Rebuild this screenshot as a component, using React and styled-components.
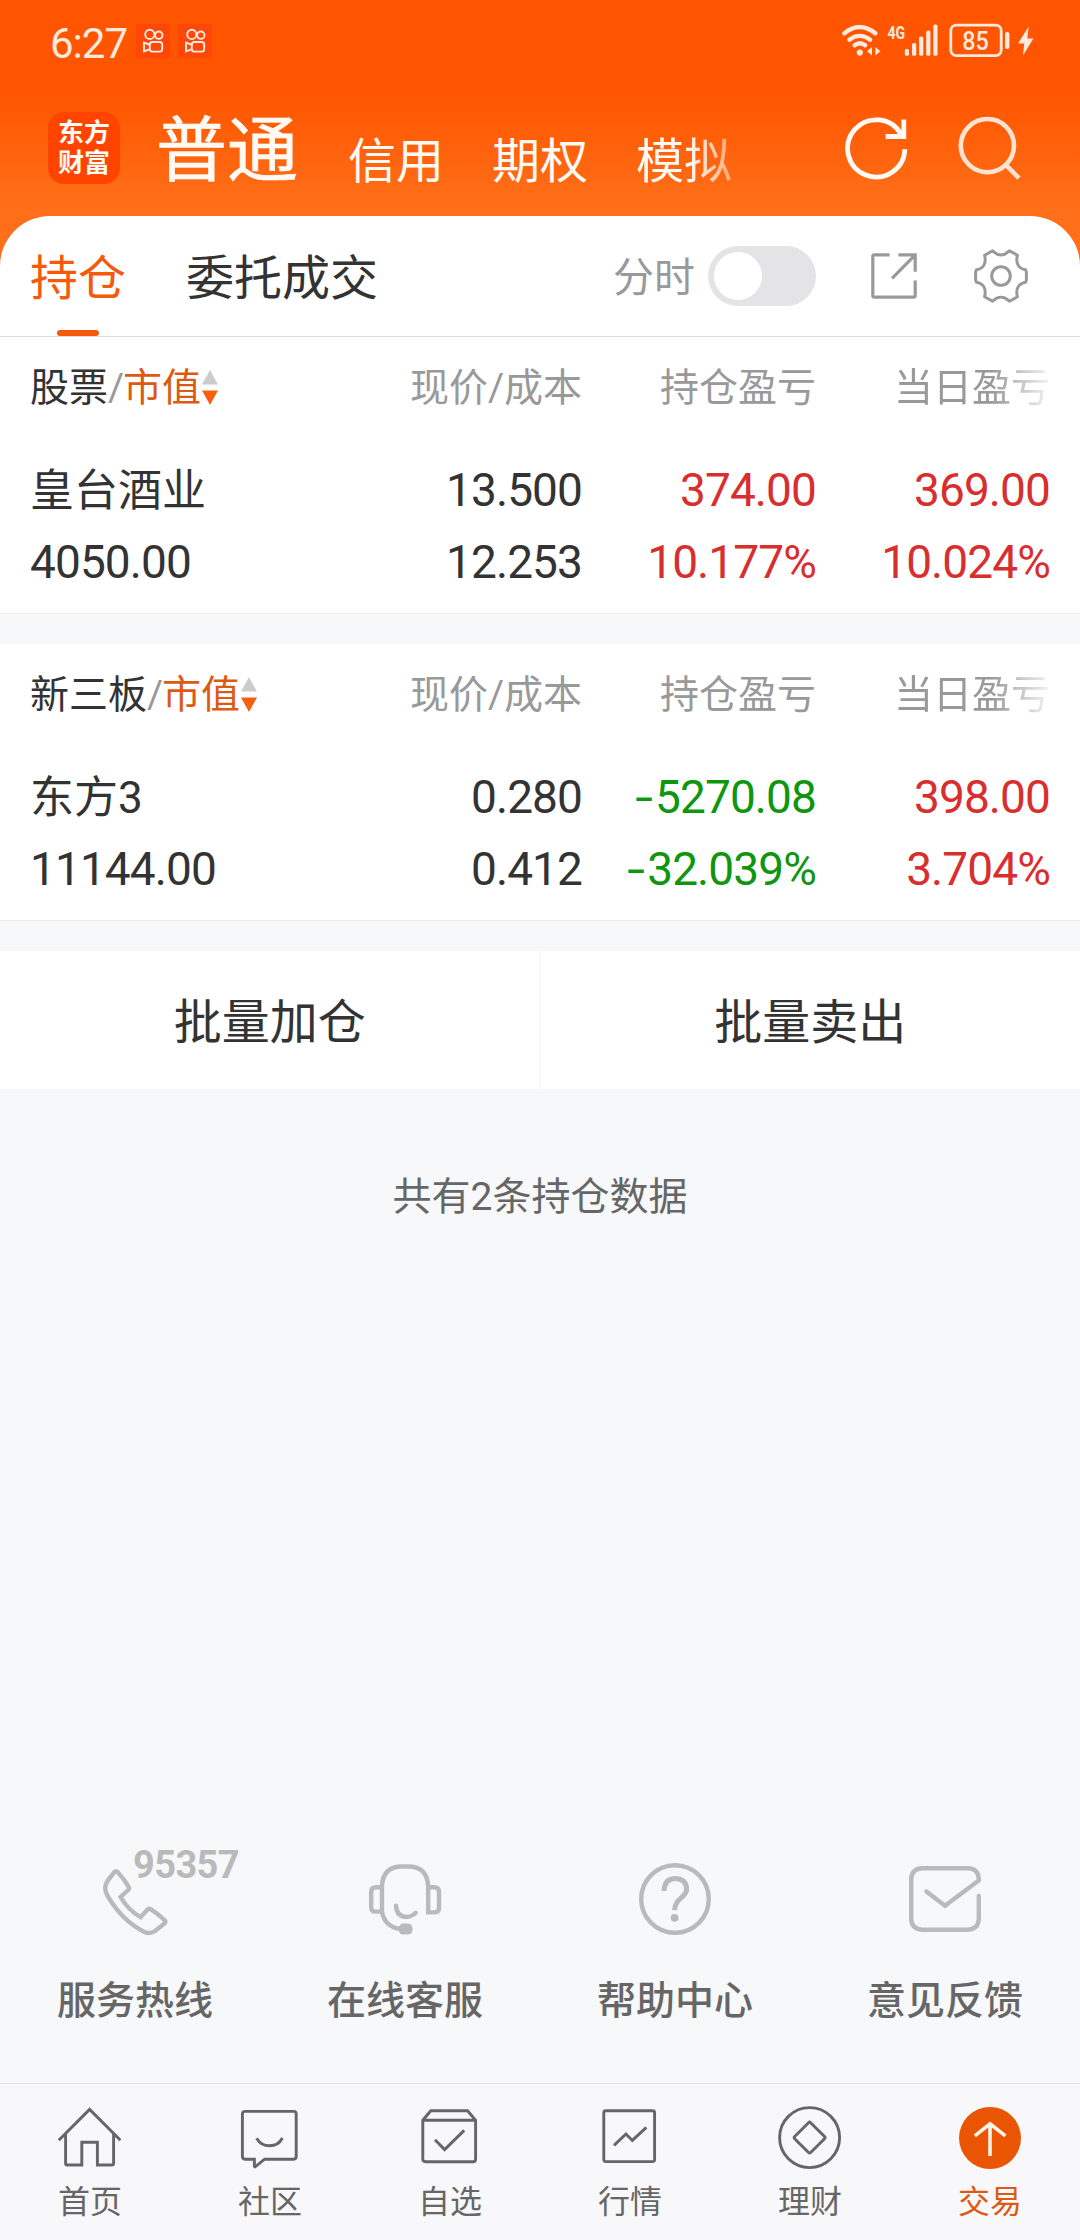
import React from 'react'
import styled, { createGlobalStyle } from 'styled-components';

const holdings = [
  {
    market: '股票',
    name: '皇台酒业',
    value: '4050.00',
    price: '13.500',
    cost: '12.253',
    profit: '374.00',
    profitRate: '10.177%',
    day: '369.00',
    dayRate: '10.024%',
  },
  {
    market: '新三板',
    name: '东方3',
    value: '11144.00',
    price: '0.280',
    cost: '0.412',
    profit: '-5270.08',
    profitRate: '-32.039%',
    day: '398.00',
    dayRate: '3.704%',
  },
]

// green for a loss, red for a gain
const Amount = ({ text }) => {
  const loss = text.startsWith('-')
  return (
    <Num $color={loss ? '#0f960f' : '#d92e2e'}>
      {loss && <Sign>-</Sign>}{loss ? text.slice(1) : text}
    </Num>
  )
}

const KuaiIcon = () => (
  <AppTile>
    <svg width="34" height="34" viewBox="0 0 34 34" fill="none" stroke="#ffeadd" strokeWidth="1.9">
      <circle cx="13.8" cy="10.4" r="4.6" />
      <circle cx="22.8" cy="11.2" r="3.7" />
      <rect x="13.8" y="18" width="12.4" height="9.6" rx="2.6" />
      <path d="M13.4 20.5L8 18.6v8.8l5.4-2" />
    </svg>
  </AppTile>
)

const StatusIcons = () => (
  <svg width="194" height="36" viewBox="842 23 194 36" fill="none" stroke="#ffeadd">
    <g strokeWidth="4.3" strokeLinecap="round">
      <path d="M844.3 33.3Q859.6 20.8 875.3 33.3" />
      <path d="M849.3 39.7Q859.6 32 870.2 39.7" />
      <path d="M854.6 45.3Q859.8 41.2 865.2 45.3" />
    </g>
    <circle cx="859.8" cy="52.6" r="3.1" fill="#ffeadd" stroke="none" />
    <g fill="#ffeadd" stroke="none">
      <path d="M872 47v8.4l-5-4.2zM875.4 47v8.4l5-4.2z" />
      <rect x="904.8" y="49" width="4.2" height="6.8" rx="1.6" />
      <rect x="912" y="43" width="4.2" height="12.8" rx="1.6" />
      <rect x="919.1" y="36.4" width="4.2" height="19.4" rx="1.6" />
      <rect x="926.2" y="30.4" width="4.2" height="25.4" rx="1.6" />
      <rect x="933.3" y="24.6" width="4.2" height="31.2" rx="1.6" />
      <rect x="1005" y="32" width="4.4" height="17" rx="2" />
      <path d="M1028.6 26.5L1018 43.5h6.2L1023 55.5l10.4-17h-6z" />
    </g>
    <rect x="950.8" y="25.2" width="50.4" height="30.4" rx="5.5" strokeWidth="2.8" />
    <g fill="#ffeadd" stroke="none" fontFamily="Roboto, sans-serif" fontWeight="500">
      <text x="887.4" y="38.6" fontSize="18.5" fontWeight="700" textLength="17.6" lengthAdjust="spacingAndGlyphs">4G</text>
      <text x="962.2" y="49.6" fontSize="25" textLength="26.6" lengthAdjust="spacingAndGlyphs">85</text>
    </g>
  </svg>
)

const RefreshIcon = () => (
  <svg width="64" height="64" viewBox="0 0 64 64" fill="none" stroke="#fffaf4" strokeWidth="4.8">
    <path d="M59.8 33.2A28.6 28.6 0 1 1 56.2 18.5" />
    <path d="M58.8 3.5v17H40.6" />
  </svg>
)

const SearchIcon = () => (
  <svg width="64" height="64" viewBox="0 0 64 64" fill="none" stroke="#ffe3d1" strokeWidth="4.6">
    <circle cx="29.4" cy="29.6" r="26.6" />
    <path d="M47.6 48.6L61 62.2" />
  </svg>
)

const ExportIcon = () => (
  <svg width="46" height="46" viewBox="0 0 46 46" fill="none" stroke="#999" strokeWidth="3.2">
    <path d="M18.6 1.8H3.4a1.6 1.6 0 0 0-1.6 1.6v39.2a1.6 1.6 0 0 0 1.6 1.6h39.2a1.6 1.6 0 0 0 1.6-1.6V27.5" />
    <path d="M27.4 1.8h16.8v17M21 25.4L44 2.2" />
  </svg>
)

const GearIcon = () => (
  <svg width="54" height="54" viewBox="0 0 54 54" fill="none" stroke="#999" strokeWidth="3" strokeLinejoin="round">
    <path d="M18.600 1.800C24 7.200 30 7.200 35.400 1.800L43.400 6.200C41.400 14.500 44.500 19.500 51.600 20.800Q52.400 22 52.400 23.500V30.500Q52.400 32 51.600 33.200C44.500 34.500 41.400 39.500 43.400 47.800L35.400 52.200C30 46.800 24 46.800 18.600 52.200L10.600 47.800C12.600 39.500 9.500 34.500 2.400 33.200Q1.600 32 1.600 30.500V23.500Q1.600 22 2.400 20.800C9.500 19.500 12.600 14.500 10.600 6.200Z" />
    <circle cx="27" cy="27" r="9.300" />
  </svg>
)

const SortIcon = () => (
  <svg width="16" height="36" viewBox="0 0 16 36">
    <path d="M8 0l8 14.6H0z" fill="#ccc" />
    <path d="M8 35L0 20.4h16z" fill="#f56010" />
  </svg>
)

const PhoneIcon = () => (
  <ServiceSvg viewBox="0 0 80 80">
    <path d="M23 13.4Q20.8 11.4 18.8 13.6L12.6 21.8Q8 29 12.4 36.6C22 53 34.5 65.5 49.4 73Q54.600 75.500 60 72L69.600 64.400Q71.400 62.600 69.400 61Q62.500 54.500 55.600 50.200Q53.800 49 52.400 50.600L45.600 58.200C37.500 53.500 30.500 46.500 25.600 38L33.200 31Q34.800 29.400 33.400 27.400Q28.500 19.500 23 13.400Z" />
  </ServiceSvg>
)

const HeadsetIcon = () => (
  <ServiceSvg viewBox="0 0 80 80">
    <path d="M17 52V27Q18 8.500 35 7.500H45Q62 8.500 63.200 27V53.400H70Q74 53 74 49V33Q74 28.600 70 28.200H63.200" />
    <path d="M17 28.200H10.400Q6.200 28.600 6.200 33V48.500Q6.200 52.600 10.400 52.600H17Q19.500 68 36 70" />
    <path d="M31 46.600Q31.500 57.600 41.500 58Q46.500 58 50.800 53.800" strokeLinecap="round" />
    <rect x="33.600" y="64.600" width="14" height="11" rx="5" fill="#bababa" stroke="none" />
  </ServiceSvg>
)

const HelpIcon = () => (
  <ServiceSvg viewBox="0 0 80 80">
    <circle cx="40" cy="40" r="33.800" />
    <path d="M29 32Q29.400 19.400 40.400 19.400Q51.600 19.800 51.600 30.500C51.600 38.500 39.600 39.500 39.600 51.200" strokeWidth="5" />
    <circle cx="39.600" cy="58.800" r="3.900" fill="#bababa" stroke="none" />
  </ServiceSvg>
)

const MailIcon = () => (
  <ServiceSvg viewBox="0 0 80 80">
    <path d="M21.400 32.400L40 46.800L73.800 21.400V19.500Q73 9.600 63 9.300H17Q7 10 6.200 19.500V60.500Q7 70 17 70.700H63Q73 70 73.800 60.500V37" strokeLinecap="round" />
  </ServiceSvg>
)

const services = [
  { label: '服务热线', icon: <PhoneIcon />, tag: '95357' },
  { label: '在线客服', icon: <HeadsetIcon /> },
  { label: '帮助中心', icon: <HelpIcon /> },
  { label: '意见反馈', icon: <MailIcon /> },
]

const navItems = [
  {
    label: '首页',
    icon: (
      <path d="M.8 34.200L31.600 3.400L62.400 34.200M7.600 27.500V57.400Q7.600 59 9.200 59H23.800V36.200H39.400V59H54Q55.600 59 55.600 57.400V27.500" />
    ),
  },
  {
    label: '社区',
    icon: (
      <>
        <path d="M7 5.400H55.600Q58.200 5.400 58.200 8V50.600Q58.200 53.200 55.600 53.200H26.600L17.200 60.800L16.400 60.400V53.200H7Q4.400 53.200 4.400 50.600V8Q4.400 5.400 7 5.400Z" />
        <path d="M18.600 32.200Q23 39.800 31.600 39.800Q40.400 39.800 44.400 32" />
      </>
    ),
  },
  {
    label: '自选',
    icon: (
      <>
        <path d="M4.800 14.200L12.800 4.700H49.600L57.600 14.200V53.200Q57.600 55.700 55 55.700H7.400Q4.800 55.700 4.800 53.200ZM4.800 14.200H57.600" />
        <path d="M17 33.800L26.600 43.600L46.200 24.400" />
      </>
    ),
  },
  {
    label: '行情',
    icon: (
      <>
        <rect x="5.800" y="4.800" width="50.800" height="50.800" rx="2" />
        <path d="M16 39.400L28 28L34.300 34.400L48.400 21.400" />
      </>
    ),
  },
  {
    label: '理财',
    icon: (
      <>
        <circle cx="31.600" cy="31.600" r="30" />
        <rect x="20.300" y="20.300" width="22.600" height="22.600" rx="1.500" transform="rotate(45 31.600 31.600)" />
      </>
    ),
  },
  {
    label: '交易',
    active: true,
    icon: (
      <>
        <circle cx="32" cy="32" r="31" fill="#ea5504" stroke="none" />
        <path d="M16.800 29.800L32 17.800L47.400 29.800M32 18V50" stroke="#fff3e6" strokeWidth="3.600" />
      </>
    ),
  },
]

const App = () => {
  return (
    <Page>
      <GlobalStyle />
      <Header>
        <StatusBar>
          <Clock>6:27</Clock>
          <KuaiIcon />
          <KuaiIcon />
          <StatusRight>
            <StatusIcons />
          </StatusRight>
        </StatusBar>
        <TitleBar>
          <Logo>
            <span>东方</span>
            <span>财富</span>
          </Logo>
          <AccountTabs>
            <AccountMain>普通</AccountMain>
            <AccountTab>信用</AccountTab>
            <AccountTab>期权</AccountTab>
            <AccountTab $fade>模拟</AccountTab>
          </AccountTabs>
          <TitleActions>
            <RefreshIcon />
            <SearchIcon />
          </TitleActions>
        </TitleBar>
      </Header>

      <TabBar>
        <Tab $active>持仓</Tab>
        <Tab>委托成交</Tab>
        <TabTools>
          <ToggleLabel>分时</ToggleLabel>
          <Toggle><Knob /></Toggle>
          <ExportIcon />
          <GearIcon />
        </TabTools>
      </TabBar>

      {holdings.map((item) => (
        <Section key={item.market}>
          <HeadRow>
            <Market>
              <b>{item.market}</b><i>/</i><em>市值</em>
              <SortIcon />
            </Market>
            <HeadCell>现价/成本</HeadCell>
            <HeadCell>持仓盈亏</HeadCell>
            <HeadCell $fade>当日盈亏</HeadCell>
          </HeadRow>
          <DataRow>
            <Name>{item.name}</Name>
            <Num>{item.price}</Num>
            <Amount text={item.profit} />
            <Amount text={item.day} />
          </DataRow>
          <DataRow>
            <Num $left>{item.value}</Num>
            <Num>{item.cost}</Num>
            <Amount text={item.profitRate} />
            <Amount text={item.dayRate} />
          </DataRow>
        </Section>
      ))}

      <BatchBar>
        <BatchButton>批量加仓</BatchButton>
        <BatchButton>批量卖出</BatchButton>
      </BatchBar>
      <Summary>共有2条持仓数据</Summary>

      <Services>
        {services.map((s) => (
          <Service key={s.label}>
            {s.icon}
            {s.tag && <Hotline>{s.tag}</Hotline>}
            <ServiceLabel>{s.label}</ServiceLabel>
          </Service>
        ))}
      </Services>

      <BottomNav>
        {navItems.map((n) => (
          <NavItem key={n.label} $active={n.active}>
            <svg width="64" height="64" viewBox="0 0 64 64" fill="none" stroke="#666" strokeWidth="2.900">{n.icon}</svg>
            <span>{n.label}</span>
          </NavItem>
        ))}
      </BottomNav>
    </Page>
  )
}

const GlobalStyle = createGlobalStyle`
  * {
    box-sizing: border-box;
  }

  body {
    margin: 0;
    background: #f7f8fa;
    font-family: Roboto, 'Noto Sans CJK SC', sans-serif;
    color: #333;
  }

  svg {
    display: block;
    flex-shrink: 0;
  }
`

const Page = styled.div`
  display: flex;
  flex-direction: column;
  width: 1080px;
  height: 2240px;
  overflow: hidden;
  background: #f7f8fa;
`

const Header = styled.header`
  height: 270px;
  flex-shrink: 0;
  background: linear-gradient(#ff5500 0, #ff5500 92px, #ff6e18 204px);
`

const StatusBar = styled.div`
  display: flex;
  align-items: center;
  gap: 8px;
  height: 82px;
  padding: 0 44px 0 50px;
`

const Clock = styled.span`
  width: 78px;
  padding-top: 5px;
  font-size: 42px;
  line-height: 46px;
  letter-spacing: -1px;
  white-space: nowrap;
  color: #ffeadd;
`

const AppTile = styled.span`
  width: 34px;
  height: 34px;
  background: #ff470a;
`

const StatusRight = styled.div`
  margin-left: auto;
`

const TitleBar = styled.div`
  display: flex;
  align-items: flex-start;
  height: 134px;
  padding: 30px 58px 0 48px;
`

const Logo = styled.div`
  display: flex;
  flex-direction: column;
  align-items: center;
  width: 72px;
  height: 72px;
  padding-top: 6px;
  border-radius: 16px;
  background: #ff4400;
  color: #fffaf4;
  font-size: 26px;
  font-weight: 700;
  line-height: 30px;
`

const AccountTabs = styled.div`
  display: flex;
  align-items: flex-start;
  gap: 48px;
  margin-left: 36px;
  height: 80px;
  color: #fffaf4;
`

const AccountMain = styled.div`
  width: 144px;
  padding-top: 1px;
  font-size: 71px;
  font-weight: 400;
  line-height: 76px;
  -webkit-text-stroke: .7px #fffaf4;
`

const AccountTab = styled.div`
  padding-top: 24px;
  font-size: 48px;
  line-height: 52px;
  mask-image: ${(p) => (p.$fade ? 'linear-gradient(90deg, #000 55%, rgba(0, 0, 0, .45) 100%)' : 'none')};
`

const TitleActions = styled.div`
  display: flex;
  gap: 49px;
  margin: 4px 0 0 auto;
`

const TabBar = styled.div`
  display: flex;
  align-items: stretch;
  height: 121px;
  margin-top: -54px;
  flex-shrink: 0;
  padding: 0 52px 0 30px;
  border-bottom: 1px solid #dcdcdc;
  border-radius: 50px 50px 0 0;
  background: #fff;
`

const Tab = styled.div`
  display: flex;
  flex-direction: column;
  align-items: center;
  justify-content: space-between;
  margin-right: 60px;
  padding-top: 37px;
  font-size: 48px;
  line-height: 52px;
  color: ${(p) => (p.$active ? '#f55a0c' : '#333')};

  &::after {
    content: '';
    width: 42px;
    height: 6px;
    border-radius: 3px;
    background: ${(p) => (p.$active ? '#f55a0c' : 'transparent')};
  }
`

const TabTools = styled.div`
  display: flex;
  align-items: center;
  margin-left: auto;

  svg {
    margin-left: 57px;
  }

  svg:nth-last-child(2) {
    margin-left: 55px;
  }
`

const ToggleLabel = styled.span`
  margin-right: 13px;
  padding-top: 4px;
  font-size: 41px;
  line-height: 46px;
  color: #999;
`

const Toggle = styled.div`
  width: 108px;
  height: 60px;
  padding: 6px;
  border-radius: 30px;
  background: #e4e4e6;
`

const Knob = styled.div`
  width: 48px;
  height: 48px;
  border-radius: 50%;
  background: #fff;
`

const Section = styled.section`
  flex-shrink: 0;
  height: 277px;
  margin-bottom: 30px;
  padding: 15px 30px 0;
  border-bottom: 1px solid #ebebeb;
  background: #fff;
`

const HeadRow = styled.div`
  display: grid;
  grid-template-columns: 318px 234px 234px 234px;
  align-items: center;
  height: 72px;
  margin-bottom: 30px;
  font-size: 39px;
  line-height: 44px;
`

const Market = styled.div`
  display: flex;
  align-items: center;

  b, i, em {
    font-weight: 400;
    font-style: normal;
  }

  i {
    width: 15px;
    color: #999;
  }

  em {
    color: #dc5a12;
  }

  svg {
    margin-left: 1px;
  }
`

const HeadCell = styled.div`
  text-align: right;
  color: #999;
  mask-image: ${(p) => (p.$fade ? 'linear-gradient(90deg, #000 175px, rgba(0, 0, 0, .12) 234px)' : 'none')};
`

const DataRow = styled.div`
  display: grid;
  grid-template-columns: 318px 234px 234px 234px;
  align-items: center;
  height: 72px;
`

const Name = styled.div`
  padding-top: 2px;
  font-size: 44px;
  line-height: 50px;
`

const Num = styled.div`
  font-size: 46px;
  line-height: 50px;
  letter-spacing: -.9px;
  white-space: nowrap;
  text-align: ${(p) => (p.$left ? 'left' : 'right')};
  color: ${(p) => p.$color || '#333'};
`

const Sign = styled.span`
  display: inline-block;
  margin-right: 3px;
  transform: scaleX(1.4);
  transform-origin: right;
`

const BatchBar = styled.div`
  display: flex;
  flex-shrink: 0;
  height: 138px;
  background: #fff;
`

const BatchButton = styled.div`
  flex: 1;
  padding-top: 46px;
  text-align: center;
  font-size: 48px;
  line-height: 52px;

  & + & {
    border-left: 1px solid #f4f5f7;
  }
`

const Summary = styled.div`
  margin-top: 86px;
  text-align: center;
  font-size: 39px;
  line-height: 44px;
  color: #666;
`

const Services = styled.div`
  display: grid;
  grid-template-columns: repeat(4, 1fr);
  height: 224px;
  margin-top: auto;
  flex-shrink: 0;
`

const Service = styled.div`
  position: relative;
  display: flex;
  flex-direction: column;
  align-items: center;
`

const ServiceSvg = styled.svg`
  width: 80px;
  height: 80px;
  fill: none;
  stroke: #bababa;
  stroke-width: 4.4px;
`

const Hotline = styled.span`
  position: absolute;
  top: -13px;
  left: 133px;
  font-size: 38px;
  font-weight: 700;
  line-height: 38px;
  letter-spacing: -.6px;
  color: #bababa;
`

const ServiceLabel = styled.span`
  margin-top: 40px;
  font-size: 39px;
  font-weight: 500;
  line-height: 44px;
  color: #666;
`

const BottomNav = styled.nav`
  display: grid;
  grid-template-columns: repeat(6, 1fr);
  height: 157px;
  flex-shrink: 0;
  border-top: 1px solid #e3e3e5;
  background: #f8f8fa;
`

const NavItem = styled.div`
  display: flex;
  flex-direction: column;
  align-items: center;
  padding-top: 22px;
  font-size: 32px;
  line-height: 36px;
  color: ${(p) => (p.$active ? '#dc5a12' : '#666')};

  span {
    margin-top: 14px;
  }
`

export default App;
